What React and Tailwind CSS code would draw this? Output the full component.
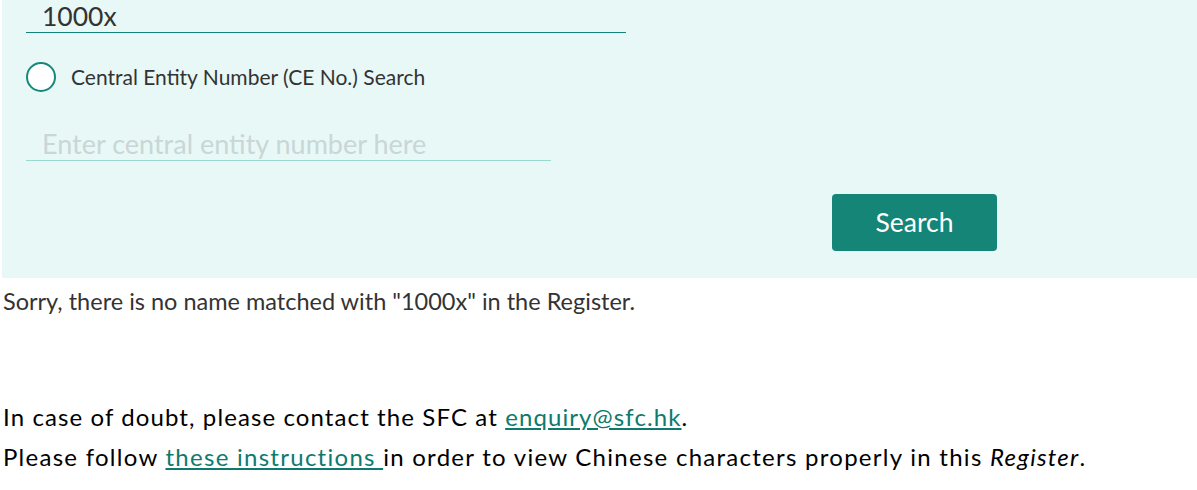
export default function App() {
  return (
    <div className="min-h-[490px] bg-white font-['Lato','Liberation_Sans',sans-serif] text-[#333]">
      {/* search panel */}
      <div className="ml-[2px] bg-[#e8f8f7] pl-[24px] pt-[2px] pb-[27px]">
        <input
          type="text"
          defaultValue="1000x"
          className="block h-[31px] w-[600px] border-b border-[#12857a] bg-transparent pl-[16px] text-[26.5px] text-[#333] outline-none"
        />

        <label className="mt-[29px] flex items-center gap-[15px]">
          <span className="h-[30px] w-[30px] shrink-0 rounded-full border-2 border-[#16877b] bg-white" />
          <span className="text-[21px] leading-[30px] text-[#333]">Central Entity Number (CE No.) Search</span>
        </label>

        <input
          type="text"
          placeholder="Enter central entity number here"
          className="mt-[37px] block h-[32px] w-[525px] border-b border-[#9ad8d0] bg-transparent pl-[16px] text-[27px] text-[#333] outline-none placeholder:text-[#c8d7d5]"
        />

        <div className="mt-[33px] pl-[806px]">
          <button className="h-[57px] w-[165px] rounded-[4px] bg-[#158578] text-[26.5px] text-white">
            Search
          </button>
        </div>
      </div>

      <p className="ml-[3px] mt-[9px] text-[23.5px] leading-[28px] text-[#333]">
        Sorry, there is no name matched with "1000x" in the Register.
      </p>

      <div className="ml-[3px] mt-[82px] text-[24px] leading-[40px] text-black">
        <p className="tracking-[1.1px]">
          In case of doubt, please contact the SFC at{' '}
          <a href="#" className="text-[#0e7a6e] underline">enquiry@sfc.hk</a>.
        </p>
        <p className="tracking-[1.27px]">
          Please follow{' '}
          <a href="#" className="text-[#0e7a6e] underline">these instructions </a>
          in order to view Chinese characters properly in this <i>Register</i>.
        </p>
      </div>
    </div>
  );
}
